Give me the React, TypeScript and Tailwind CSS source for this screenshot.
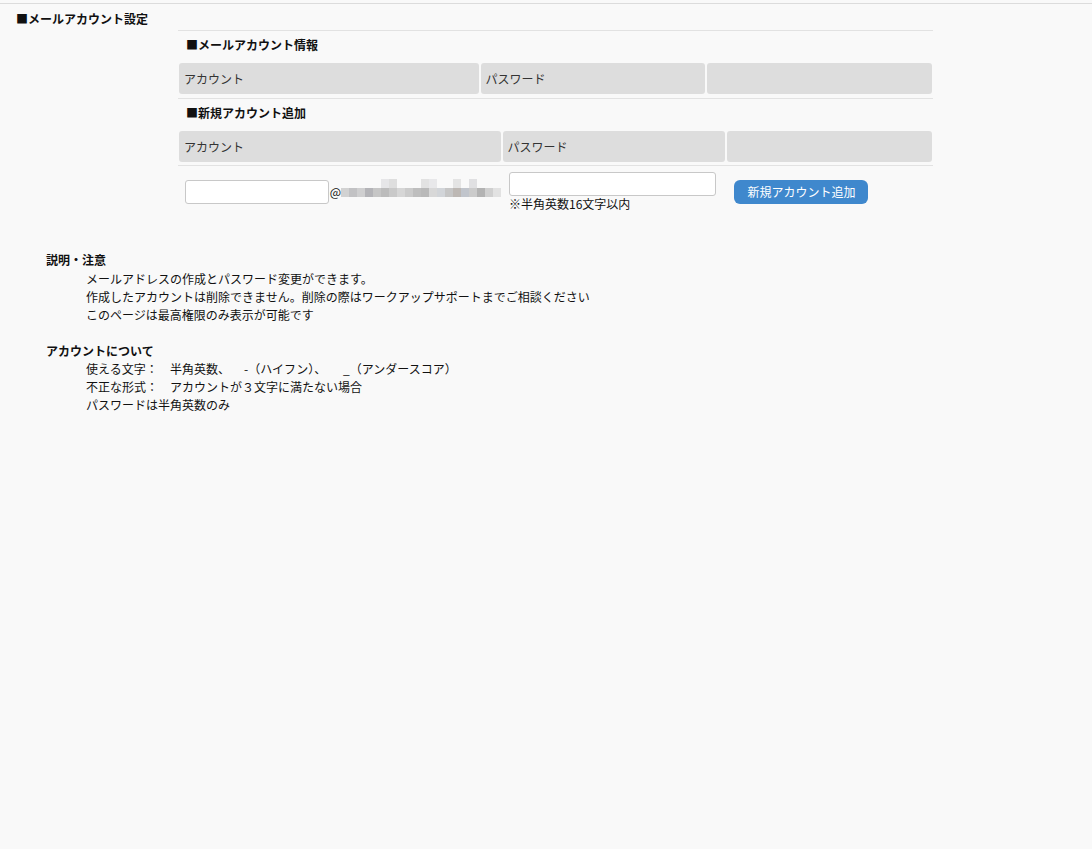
import React from 'react';

const FONT = { fontFamily: '"Noto Sans CJK JP", "Noto Sans", sans-serif' };

// pixelated (mosaic) domain name
const MOSAIC_TOP = [
  'bg-transparent', 'bg-transparent', 'bg-transparent', 'bg-transparent', 'bg-transparent',
  'bg-[#e6e6e8]', 'bg-[#dedede]', 'bg-transparent', 'bg-transparent', 'bg-transparent',
  'bg-[#e2e2e2]', 'bg-[#e8e8ea]', 'bg-transparent', 'bg-transparent', 'bg-[#e4e4e4]',
  'bg-transparent', 'bg-[#e0e0e2]', 'bg-transparent', 'bg-transparent', 'bg-transparent',
];
const MOSAIC_BOTTOM = [
  'bg-[#d2d2d2]', 'bg-[#c2c2c4]', 'bg-[#cfcfd0]', 'bg-[#b4b4b8]', 'bg-[#c6c6c6]',
  'bg-[#bcbcbc]', 'bg-[#c9c9c9]', 'bg-[#d6d6d6]', 'bg-[#cbcbcb]', 'bg-[#bebebe]',
  'bg-[#b9b9b9]', 'bg-[#d8d8d8]', 'bg-[#d2d5d9]', 'bg-[#c6c6c6]', 'bg-[#bdb8b4]',
  'bg-[#c1c5cc]', 'bg-[#cbcbcb]', 'bg-[#b3b3b3]', 'bg-[#d0d0d0]', 'bg-[#e2e2e2]',
];

function HeaderRow({ widths, labels }: { widths: string[]; labels: string[] }) {
  return (
    <div className="flex gap-[2px] px-[1px]">
      {widths.map((w, i) => (
        <div key={i} className={`${w} h-[31px] flex items-center px-[5px] rounded-[3px] bg-[#dddddd] text-[12px] text-[#333]`}>
          {labels[i]}
        </div>
      ))}
    </div>
  );
}

export default function App() {
  return (
    <div className="min-h-screen bg-[#f9f9f9] pt-[3px] text-[#111] text-[12px]" style={FONT}>
      <div className="border-t border-[#dcdcdc]">
        <div className="pl-4 pt-[6px] leading-[18px] font-bold">■メールアカウント設定</div>

        <div className="ml-[178px] w-[755px] mt-[2px]">
          <div className="border-t border-[#e2e2e2] pt-[5px] pl-2 leading-[18px] font-bold">■メールアカウント情報</div>
          <div className="mt-[9px]">
            <HeaderRow widths={['w-[300px]', 'w-[225px]', 'w-[225px]']} labels={['アカウント', 'パスワード', '']} />
          </div>
          <div className="mt-[4px] border-t border-[#e2e2e2] pt-[5px] pl-2 leading-[18px] font-bold">■新規アカウント追加</div>
          <div className="mt-[9px]">
            <HeaderRow widths={['w-[322px]', 'w-[223px]', 'w-[205px]']} labels={['アカウント', 'パスワード', '']} />
          </div>
          <div className="mt-[3px] border-t border-[#e2e2e2] h-[50px] pt-[2px] flex gap-[2px] px-[1px]">
            <div className="w-[322px] flex items-center pl-[6px]">
              <input className="w-[146px] h-[24px] rounded-[3px] border border-[#c8c8c8] bg-white" />
              <span className="ml-[1px] leading-none">@</span>
              <div className="flex flex-col mb-[8px]">
                <div className="flex">
                  {MOSAIC_TOP.map((c, i) => (
                    <div key={i} className={`w-[8px] h-[9px] ${c}`} />
                  ))}
                </div>
                <div className="flex">
                  {MOSAIC_BOTTOM.map((c, i) => (
                    <div key={i} className={`w-[8px] h-[9px] ${c}`} />
                  ))}
                </div>
              </div>
            </div>
            <div className="w-[223px] flex flex-col justify-center pl-[6px]">
              <input type="password" className="w-[207px] h-[24px] rounded-[3px] border border-[#c8c8c8] bg-white" />
              <div className="leading-[16px]">※半角英数16文字以内</div>
            </div>
            <div className="w-[205px] flex items-center pl-[6px]">
              <button className="ml-[1px] w-[134px] h-[24px] rounded-[6px] bg-[#3f88cd] text-white text-[12px] leading-none">
                新規アカウント追加
              </button>
            </div>
          </div>
        </div>

        <div className="mt-[36px] pl-[46px] leading-[18px]">
          <div className="font-bold h-[19px]">説明・注意</div>
          <div className="pl-[40px]">
            <div>メールアドレスの作成とパスワード変更ができます。</div>
            <div>作成したアカウントは削除できません。削除の際はワークアップサポートまでご相談ください</div>
            <div>このページは最高権限のみ表示が可能です</div>
          </div>
          <div className="h-[18px]" />
          <div className="font-bold">アカウントについて</div>
          <div className="pl-[40px] whitespace-pre">
            <div className="flex">
              <span className="w-[84px]">使える文字：</span>
              <span className="w-[74px]">半角英数、</span>
              <span className="w-[99px]">-（ハイフン）、</span>
              <span>_（アンダースコア）</span>
            </div>
            <div className="flex">
              <span className="w-[84px]">不正な形式：</span>
              <span>アカウントが３文字に満たない場合</span>
            </div>
            <div>パスワードは半角英数のみ</div>
          </div>
        </div>
      </div>
    </div>
  );
}
